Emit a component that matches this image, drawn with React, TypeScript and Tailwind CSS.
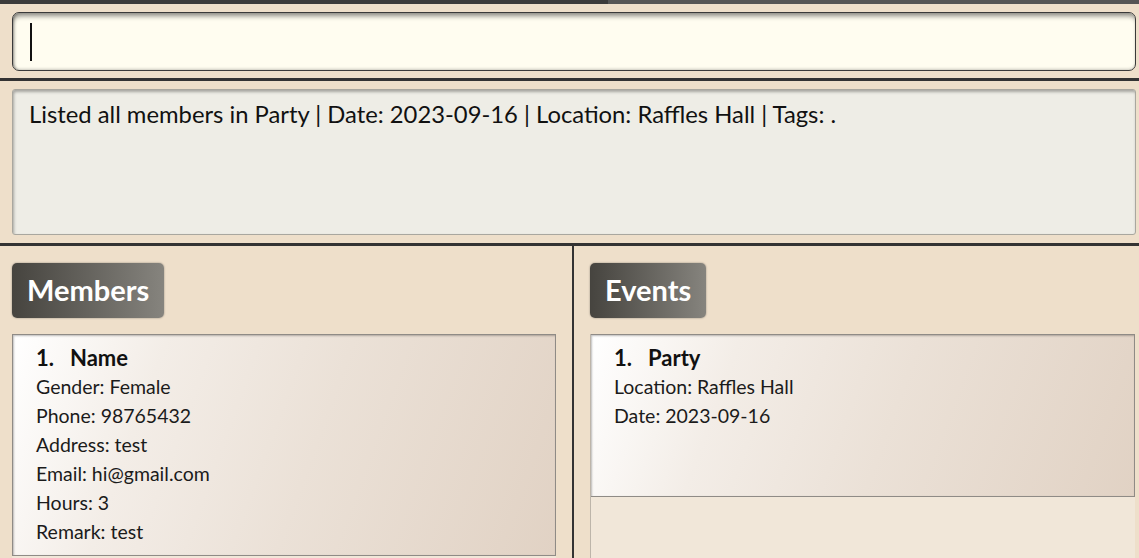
import { memo } from "react";

const font = { fontFamily: "Lato, 'Open Sans', sans-serif" };

const members = [
  {
    id: 1,
    name: "Name",
    lines: [
      "Gender: Female",
      "Phone: 98765432",
      "Address: test",
      "Email: hi@gmail.com",
      "Hours: 3",
      "Remark: test",
    ],
  },
];

const events = [
  {
    id: 1,
    name: "Party",
    lines: ["Location: Raffles Hall", "Date: 2023-09-16"],
  },
];

const PanelHeader = ({ title }: { title: string }) => (
  <div className="self-start rounded-[5px] bg-gradient-to-r from-[#46443f] to-[#86847e] px-[15px] pt-[9px] pb-[11px] text-[29px] leading-[35px] font-bold text-white shadow-[0_0_2px_rgba(0,0,0,0.4)]">
    {title}
  </div>
);

const Card = ({ item, className }: { item: any; className: string }) => (
  <div
    className={`border-y border-[#8f8b86] bg-[linear-gradient(110deg,#ffffff_0%,#f3ede7_25%,#ebe1d7_55%,#e1d2c4_100%)] pl-[23px] pt-[10px] shadow-[inset_1px_1px_2px_rgba(0,0,0,0.25)] ${className}`}
  >
    <div className="flex text-[22px] font-bold leading-[26px] text-[#111]">
      <span className="w-[34px]">{item.id}.</span>
      <span>{item.name}</span>
    </div>
    <div className="mt-[1px] flex flex-col text-[19.5px] leading-[29px] text-[#1b1b1b]">
      {item.lines.map((l: string) => (
        <span key={l}>{l}</span>
      ))}
    </div>
  </div>
);

export default memo(function App() {
  return (
    <div
      style={font}
      className="flex h-[558px] w-[1139px] flex-col overflow-hidden bg-[#eedfca]"
    >
      {/* top bar */}
      <div className="flex h-[4px] shrink-0">
        <div className="w-[608px] bg-[#3b3b3b]" />
        <div className="flex-1 bg-[#555]" />
      </div>

      {/* command box */}
      <div className="shrink-0 pl-[12px] pr-[3px] pt-[8px] pb-[7px]">
        <div className="flex h-[59px] items-center rounded-[7px] border-[1.5px] border-[#3a3a3a] bg-[#fffdf0] pl-[17px] shadow-[inset_1px_5px_5px_-2px_rgba(0,0,0,0.45),inset_3px_0_3px_-2px_rgba(0,0,0,0.3),inset_0_-2px_3px_-1px_rgba(0,0,0,0.2)]">
          <div className="h-[38px] w-[1.5px] bg-[#111]" />
        </div>
      </div>
      <div className="h-[3px] shrink-0 bg-[#333]" />

      {/* result display */}
      <div className="shrink-0 pl-[12px] pr-[3px] pt-[8px] pb-[8px]">
        <div className="h-[146px] rounded-[3px] border border-[#a9a79f] bg-[#eeede6] px-[16px] pt-[9px] text-[23.8px] leading-[30px] text-[#111] shadow-[inset_1px_2px_3px_rgba(0,0,0,0.3)]">
          Listed all members in Party | Date: 2023-09-16 | Location: Raffles Hall | Tags: .
        </div>
      </div>
      <div className="h-[3px] shrink-0 bg-[#333]" />

      {/* panels */}
      <div className="flex min-h-0 flex-1">
        <section className="flex w-[572px] flex-col gap-[16px] pt-[17px] pl-[12px] pr-[16px]">
          <PanelHeader title="Members" />
          <div className="flex flex-1 flex-col bg-[#f1e7d9]">
            {members.map((m) => (
              <Card key={m.id} item={m} className="h-[222px] border-x" />
            ))}
          </div>
        </section>
        <div className="w-[2px] shrink-0 bg-[#333]" />
        <section className="flex flex-1 flex-col gap-[16px] pt-[17px] pl-[16px] pr-[4px]">
          <PanelHeader title="Events" />
          <div className="flex flex-1 flex-col border-l border-[#bdb5aa] bg-[#f1e7d9]">
            {events.map((e) => (
              <Card key={e.id} item={e} className="h-[163px] border-r" />
            ))}
          </div>
        </section>
      </div>
    </div>
  );
});
